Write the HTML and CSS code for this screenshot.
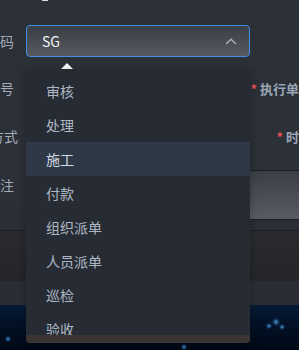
FILE: index.html
```html
<!DOCTYPE html>
<html lang="zh-CN">
<head>
    <meta charset="UTF-8">
    <meta name="viewport" content="width=device-width, initial-scale=1.0">
    <title>派单</title>
    <link rel="stylesheet" href="styles.css">
</head>
<body>
    <div class="dialog">
        <div class="tab-mark"></div>
        <div class="form">
            <div class="row row-code">
                <div class="label">编码</div>
                <div class="field">
                    <div class="select is-focus">
                        <span class="select-value">SG</span>
                        <svg class="chevron" width="12" height="7" viewBox="0 0 12 7">
                            <path d="M1 6 L6 1.2 L11 6" fill="none" stroke="#a9afb8" stroke-width="1.4"/>
                        </svg>
                    </div>
                </div>
            </div>
            <div class="row row-no">
                <div class="label">单号</div>
                <div class="field"></div>
                <div class="label-right"><span class="req">*</span>执行单位</div>
            </div>
            <div class="row row-way">
                <div class="label label-wide">方式</div>
                <div class="field"></div>
                <div class="label-right"><span class="req">*</span>时间</div>
            </div>
            <div class="row row-note">
                <div class="label">备注</div>
                <div class="textarea"></div>
            </div>
        </div>
        <div class="footer"></div>

        <div class="dropdown">
            <div class="dropdown-arrow"></div>
            <div class="dropdown-panel">
                <ul class="options">
                    <li>审核</li>
                    <li>处理</li>
                    <li class="hover">施工</li>
                    <li>付款</li>
                    <li>组织派单</li>
                    <li>人员派单</li>
                    <li>巡检</li>
                    <li>验收</li>
                </ul>
                <div class="scroll-track"></div>
            </div>
        </div>
    </div>
    <div class="stage">
        <span class="glow g1"></span>
        <span class="glow g2"></span>
        <span class="glow g3"></span>
        <span class="glow g4"></span>
        <span class="glow g5"></span>
    </div>
</body>
</html>
```

FILE: styles.css
```css
html, body {
    margin: 0;
    padding: 0;
}
body {
    width: 299px;
    height: 350px;
    overflow: hidden;
    background: #020b1b;
    font-family: "Noto Sans CJK SC", "Noto Sans", sans-serif;
    font-size: 14px;
}
.dialog {
    position: relative;
    z-index: 1;
    height: 305px;
    background: linear-gradient(180deg, #2b2f36 0%, #2c3037 60%, #2a2d33 83%);
}
.tab-mark {
    width: 6px;
    height: 1px;
    margin-left: 42px;
    background: #d8dde4;
    margin-bottom: 1px;
}
.form {
    padding-top: 23px;
    height: 229px;
    box-sizing: border-box;
    border-bottom: 1px solid #1d1f23;
}
.row {
    display: flex;
    align-items: center;
}
.row-code {
    height: 32px;
}
.row-no {
    height: 32px;
    margin-top: 15px;
}
.row-way {
    height: 32px;
    margin-top: 16px;
}
.row-note {
    height: 48px;
    margin-top: 18px;
    align-items: flex-start;
}
.label {
    width: 14px;
    flex: none;
    display: flex;
    justify-content: flex-end;
    white-space: nowrap;
    margin-right: 12px;
    color: #a2abb7;
    line-height: 20px;
}
.label-wide {
    width: 18px;
    margin-right: 8px;
}
.row-note .label {
    margin-top: 5px;
}
.field {
    width: 224px;
    flex: none;
    height: 32px;
}
.label-right {
    width: 62px;
    flex: none;
    text-align: right;
    white-space: nowrap;
    font-size: 13px;
    color: #9aa6b6;
    font-weight: bold;
}
.req {
    color: #e0524f;
    margin-right: 3px;
}
.select {
    height: 32px;
    box-sizing: border-box;
    border: 1px solid #3f8fe6;
    border-radius: 4px;
    background: linear-gradient(180deg, #3a3e45 0%, #565960 100%);
    display: flex;
    align-items: center;
    justify-content: space-between;
    padding: 0 12px 0 15px;
}
.select-value {
    color: #f2f4f7;
}
.chevron {
    display: block;
}
.textarea {
    flex: 1;
    height: 48px;
    border-top: 1px solid #1c1e22;
    border-bottom: 1px solid #1c1e22;
    background: linear-gradient(180deg, #3a3e45 0%, #595c62 100%);
}
.footer {
    height: 50px;
    background: linear-gradient(180deg, #292b30 0%, #232528 100%);
}
.dropdown {
    position: absolute;
    z-index: 5;
    left: 26px;
    top: 63px;
    width: 224px;
}
.dropdown-arrow {
    width: 0;
    height: 0;
    margin-left: 35px;
    border-left: 6px solid transparent;
    border-right: 6px solid transparent;
    border-bottom: 6px solid #f4f6f8;
}
.dropdown-panel {
    margin-top: 1px;
    background: #272c34;
    border-radius: 0 0 4px 4px;
    overflow: hidden;
    box-shadow: 0 2px 8px rgba(0, 0, 0, 0.25);
}
.options {
    list-style: none;
    margin: 0;
    padding: 4px 0 0;
    height: 265px;
    box-sizing: border-box;
    overflow: hidden;
}
.options li {
    height: 34px;
    line-height: 34px;
    padding-left: 20px;
    color: #aeb8c4;
}
.options li.hover {
    background: #2e3847;
    color: #d4dbe3;
}
.scroll-track {
    height: 8px;
    background: #3a3533;
}
.stage {
    position: relative;
    height: 45px;
    background: linear-gradient(180deg, #071a34 0%, #031128 40%, #010814 100%);
}
.glow {
    position: absolute;
    width: 6px;
    height: 6px;
    border-radius: 50%;
    background: radial-gradient(circle, rgba(90, 170, 230, 0.9) 0%, rgba(40, 110, 180, 0.3) 50%, rgba(0, 0, 0, 0) 100%);
}
.g1 { left: 266px; top: 18px; }
.g2 { left: 272px; top: 13px; width: 8px; height: 8px; }
.g3 { left: 279px; top: 19px; }
.g4 { left: 181px; top: 39px; }
.g5 { left: 5px; top: 31px; }
```
